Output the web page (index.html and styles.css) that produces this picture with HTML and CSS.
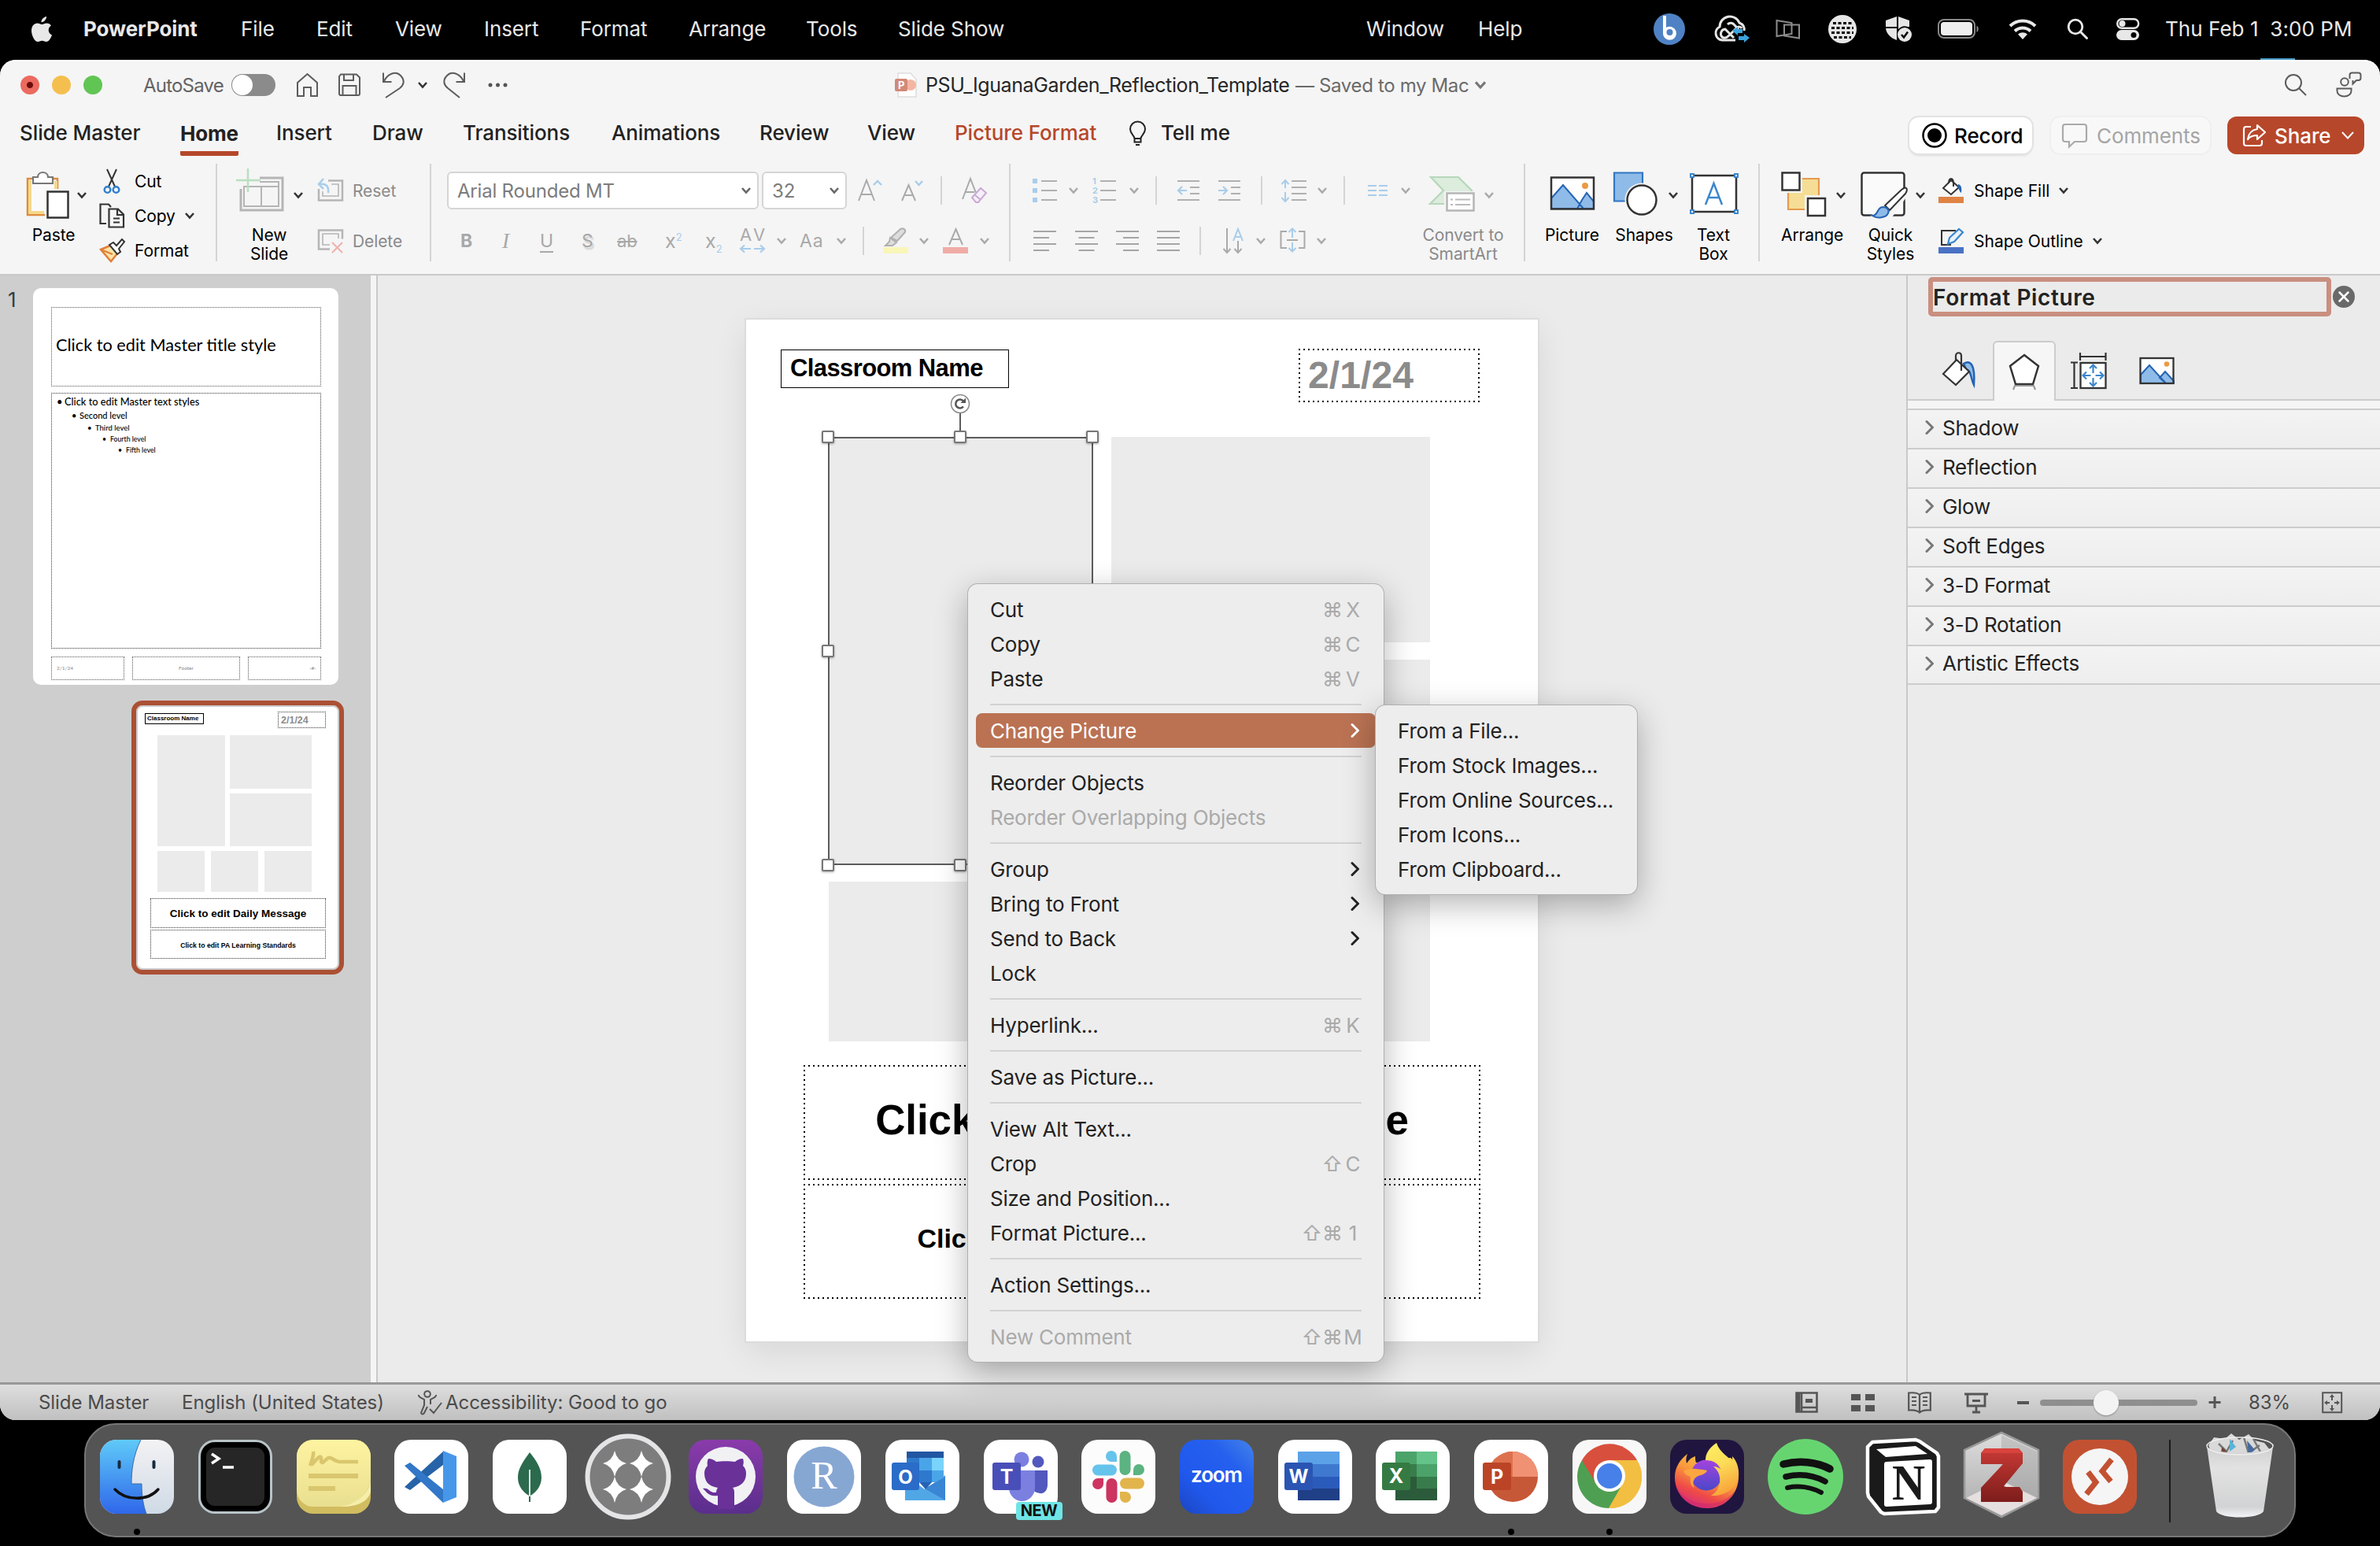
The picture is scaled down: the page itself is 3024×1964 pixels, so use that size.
FILE: index.html
```html
<!DOCTYPE html>
<html lang="en">
<head>
<meta charset="utf-8">
<title>PSU_IguanaGarden_Reflection_Template</title>
<link rel="stylesheet" href="styles.css">
</head>
<body>
<svg class="defs" width="0" height="0">
  <symbol id="chev" viewBox="0 0 14 10"><path d="M2 2l5 5.500L12 2" fill="none" stroke="currentColor" stroke-width="2.600"/></symbol>
  <symbol id="go" viewBox="0 0 12 20"><path d="M2 2.500l7.500 7.500-7.500 7.500" fill="none" stroke="currentColor" stroke-width="3" stroke-linecap="round" stroke-linejoin="round"/></symbol>
  <linearGradient id="gFinder" x2="0" y2="1"><stop offset="0" stop-color="#5fcaf8"/><stop offset="1" stop-color="#2f67ea"/></linearGradient>
  <linearGradient id="gFinder2" x2="0" y2="1"><stop offset="0" stop-color="#f3f2f4"/><stop offset="1" stop-color="#cfdae6"/></linearGradient>
  <linearGradient id="gNote" x2="0" y2="1"><stop offset="0" stop-color="#fdf3a0"/><stop offset="1" stop-color="#e9df90"/></linearGradient>
  <linearGradient id="gGit" x2="0" y2="1"><stop offset="0" stop-color="#8a3bab"/><stop offset="1" stop-color="#5a2e8c"/></linearGradient>
  <linearGradient id="gZoom" x1="1" y1="0" x2="0" y2="1"><stop offset="0" stop-color="#4584e8"/><stop offset=".3" stop-color="#2560ee"/><stop offset=".7" stop-color="#2058ec"/><stop offset="1" stop-color="#1c45c0"/></linearGradient>
  <linearGradient id="gFox" x1=".8" y1="0" x2=".3" y2="1"><stop offset="0" stop-color="#fbd84c"/><stop offset=".45" stop-color="#f9983c"/><stop offset=".75" stop-color="#ee4a48"/><stop offset="1" stop-color="#d42c80"/></linearGradient>
  <linearGradient id="gFlame" x2=".3" y2="1"><stop offset="0" stop-color="#fdf163"/><stop offset=".5" stop-color="#fbdc58"/><stop offset="1" stop-color="#f9a83c"/></linearGradient>
  <linearGradient id="gFoxIn" x2="0" y2="1"><stop offset="0" stop-color="#a443e0"/><stop offset="1" stop-color="#4a48c8"/></linearGradient>
  <linearGradient id="gZot" x2="0" y2="1"><stop offset="0" stop-color="#c93a35"/><stop offset="1" stop-color="#7c1d1b"/></linearGradient>
  <linearGradient id="gZotBg" x2="0" y2="1"><stop offset="0" stop-color="#dedede"/><stop offset="1" stop-color="#a9a9aa"/></linearGradient>
  <linearGradient id="gTrash" x2="0" y2="1"><stop offset="0" stop-color="#cfcfd0"/><stop offset=".3" stop-color="#e2e2e2"/><stop offset=".85" stop-color="#d2d3d4"/><stop offset="1" stop-color="#f2f4f8"/></linearGradient>
</svg>

<nav class="menubar">
  <svg width="28" height="34" viewBox="0 0 28 34"><path fill="#e8e8e8" d="M20 1c.3 3-3 7.500-6.500 7.300C13.200 5 16.500 1.500 20 1zM26 12.500c-5 3-4 10 1 12-1.500 4.200-4 8.500-7 8.500-2.200 0-3-1.300-5.500-1.300S11 33 9 33c-4 0-8-8-8-14 0-6 3.500-9.500 7.500-9.500 2.300 0 4 1.500 5.700 1.500 1.800 0 3.500-1.500 6.300-1.500 2.200 0 4.200 1.200 5.500 3z"/></svg>
  <b>PowerPoint</b><span>File</span><span>Edit</span><span>View</span><span>Insert</span><span>Format</span><span>Arrange</span><span>Tools</span><span>Slide Show</span><span>Window</span><span>Help</span>
  <svg width="40" height="40" viewBox="0 0 40 40"><circle cx="20" cy="20" r="20" fill="#4f82c4"/><path d="M12 3v22a8.500 8.500 0 1 0 4-7V3z" fill="#fff"/><circle cx="20.500" cy="24" r="4" fill="#4f82c4"/></svg>
  <svg width="46" height="34" viewBox="0 0 46 34"><g fill="none" stroke="#e6e6e6" stroke-width="3"><path d="M28 31H11A9 9 0 0 1 8 14 13 13 0 0 1 33 9c5 2 7 6 6 10"/><path d="M26 28L15 17a6 6 0 0 0-4 10c3 2.500 6 1 9-2l9-9c3-3 6-2 7 0M18 11c3-3 7-2 9 1l5 5"/></g><path d="M24 19l7-5v3h6v5h-6v3zM46 28l-7-5v3h-7v5h7v3z" fill="#3da3dd"/></svg>
  <svg width="32" height="26" viewBox="0 0 32 26"><path d="M1.500 2l19 3v14l-19 3zM11 7.500h19v17l-19-3z" fill="none" stroke="#8c8c8c" stroke-width="2"/></svg>
  <svg width="36" height="36" viewBox="0 0 36 36"><circle cx="18" cy="18" r="18" fill="#e6e6e6"/><path d="M6 10.500h24M4 16.500h28M4 22.500h28M7 28.500h22" stroke="#000" stroke-width="3" stroke-dasharray="4 2.500"/></svg>
  <svg width="34" height="34" viewBox="0 0 34 34"><path fill="#e6e6e6" d="M0 6l14-5v13H0zM16 1l14 5v8h-2a11 11 0 0 0-12 3zM0 16h14v15C6 28 1 23 0 16z"/><circle cx="24" cy="24" r="9" fill="#e6e6e6"/><path d="M20 24l3 3.500 5-7" stroke="#000" stroke-width="2.500" fill="none"/></svg>
  <svg width="54" height="26" viewBox="0 0 54 26"><rect x="1" y="1" width="46" height="23" rx="7" fill="none" stroke="#888" stroke-width="2"/><rect x="4" y="4" width="40" height="17" rx="4" fill="#eee"/><path d="M49.500 8.500c3 1.500 3 7 0 8.500z" fill="#888"/></svg>
  <svg width="36" height="28" viewBox="0 0 36 28"><g fill="none" stroke="#e8e8e8" stroke-width="4"><path d="M2 10a23 23 0 0 1 32 0M8 16.500a14.500 14.500 0 0 1 20 0"/></g><path d="M18 27l-6-6.500a9 9 0 0 1 12 0z" fill="#e8e8e8"/></svg>
  <svg width="28" height="28" viewBox="0 0 28 28"><circle cx="11" cy="11" r="8.800" fill="none" stroke="#e8e8e8" stroke-width="2.800"/><path d="M17.500 17.500l8 8" stroke="#e8e8e8" stroke-width="3" stroke-linecap="round"/></svg>
  <svg width="30" height="28" viewBox="0 0 30 28"><rect x="1.200" y="1.200" width="27" height="11.600" rx="5.800" fill="none" stroke="#e8e8e8" stroke-width="2.400"/><circle cx="7.500" cy="7" r="4" fill="#e8e8e8"/><rect y="15" width="29" height="13" rx="6.500" fill="#e8e8e8"/><circle cx="22" cy="21.500" r="3.500" fill="#000"/></svg>
  <span class="clock">Thu Feb 1&nbsp; 3:00 PM</span>
</nav>

<div class="window">
  <i class="tick"></i>
  <header class="titlebar">
    <div class="lights"><i class="red"></i><i class="yellow"></i><i class="green"></i></div>
    <span class="autosave">AutoSave</span>
    <i class="toggle"></i>
    <svg class="ln" width="30" height="32" viewBox="0 0 30 32"><path d="M2 30V13L14.500 2 27 13v17h-8V19h-9v11z"/></svg>
    <svg class="ln" width="30" height="30" viewBox="0 0 30 30"><path d="M4 1.500h20l4 4V26a2 2 0 0 1-2 2H4a2 2 0 0 1-2-2V4zM8 2v7h12V2M6.500 28V16h17v12"/></svg>
    <svg class="ln" width="30" height="34" viewBox="0 0 30 34"><path d="M2 1.500V13h10.500M3 12C8 2 18-1 24 5s4 12-1 16L5 33"/></svg>
    <svg class="chev dk" width="14" height="10"><use href="#chev"/></svg>
    <svg class="ln" width="30" height="34" viewBox="0 0 30 34"><path d="M27 1.500V13H16.500M26 12C21 2 11-1 5 5s-4 12 1 16l15 12"/></svg>
    <svg width="28" height="8" viewBox="0 0 28 8"><g fill="#555"><circle cx="3" cy="4" r="2.500"/><circle cx="12.500" cy="4" r="2.500"/><circle cx="22" cy="4" r="2.500"/></g></svg>
    <svg width="30" height="32" viewBox="0 0 30 32"><path d="M4 1h16l7 8v22H4z" fill="#fff" stroke="#ddd" stroke-width="1.500"/><circle cx="20" cy="16" r="7" fill="#f4b6a2"/><rect y="8" width="16" height="16" rx="2" fill="#d28a78"/><text x="4" y="21" font-size="13" font-weight="700" fill="#fff">P</text></svg>
    <span class="doc">PSU_IguanaGarden_Reflection_Template</span>
    <span class="saved">— Saved to my Mac</span>
    <svg class="chev gy" width="18" height="12"><use href="#chev"/></svg>
    <svg class="ln" width="30" height="30" viewBox="0 0 30 30"><circle cx="12" cy="12" r="10"/><path d="M19 19l9 9"/></svg>
    <svg class="ln" width="34" height="34" viewBox="0 0 34 34"><circle cx="11" cy="13" r="4.800"/><path d="M1.500 21.500h18v3c0 4-4 7-9 7s-9-3-9-7zM17.500 9V4.500a3 3 0 0 1 3-3h8a3 3 0 0 1 3 3V8a3 3 0 0 1-3 3H26l-4.500 4.500V11"/></svg>
  </header>

  <nav class="tabs">
    <span>Slide Master</span><span class="active">Home</span><span>Insert</span><span>Draw</span><span>Transitions</span><span>Animations</span><span>Review</span><span>View</span><span class="hot">Picture Format</span>
    <svg class="bulb" width="24" height="32" viewBox="0 0 24 32"><path d="M7.500 22c0-4-5.500-6-5.500-12a9.500 9.500 0 0 1 19 0c0 6-5.500 8-5.500 12zM7.500 22v4.500h8V22M9 30h5" fill="none" stroke="#222" stroke-width="2"/></svg>
    <span>Tell me</span>
    <div class="btn record"><svg width="32" height="32" viewBox="0 0 32 32"><circle cx="16" cy="16" r="14.500" fill="none" stroke="#000" stroke-width="2.500"/><circle cx="16" cy="16" r="9" fill="#000"/></svg>Record</div>
    <div class="btn comments"><svg width="34" height="32" viewBox="0 0 34 32"><path d="M5 2h24a3 3 0 0 1 3 3v16a3 3 0 0 1-3 3H17l-7 6.500V24H5a3 3 0 0 1-3-3V5a3 3 0 0 1 3-3z" fill="none" stroke="#aaa" stroke-width="2.200"/></svg>Comments</div>
    <div class="btn share"><svg width="32" height="30" viewBox="0 0 32 30"><path d="M11 4H5a3 3 0 0 0-3 3v18a3 3 0 0 0 3 3h17a3 3 0 0 0 3-3v-4M19 2l10 9-10 9v-5c-6 0-9 1-12 5 1-8 5-12 12-13z" fill="none" stroke="#fff" stroke-width="2.200" stroke-linejoin="round"/></svg>Share<svg width="20" height="12" viewBox="0 0 20 12"><path d="M1 2l7 7.500L15 2" fill="none" stroke="#fff" stroke-width="2"/></svg></div>
  </nav>

  <section class="ribbon">
    <div class="group g-clip">
      <div class="big"><svg width="80" height="60" viewBox="0 0 80 60"><path d="M2 9h38v46H2z" fill="#fafafa" stroke="#e08a3c" stroke-width="2.500"/><path d="M5 11v41h18" fill="none" stroke="#f5d88a" stroke-width="4"/><path d="M38 12v12" stroke="#f5d88a" stroke-width="4"/><path d="M9 15V7h6c0-8 13-8 13 0h6v8z" fill="#fff" stroke="#777" stroke-width="2.200"/><rect x="24" y="22" width="34" height="38" fill="#f5f5f5"/><rect x="27.500" y="25.500" width="26" height="33" fill="#fff" stroke="#333" stroke-width="2.500"/><path d="M66 27l5 5.500 5-5.500" fill="none" stroke="#333" stroke-width="2.600"/></svg><p class="w70">Paste</p></div>
      <div class="small three">
        <div><svg width="34" height="32" viewBox="0 0 34 32"><path d="M10 1l10 22M22 1L12 23" stroke="#333" stroke-width="2"/><g fill="none" stroke="#2f7fd0" stroke-width="2.500"><circle cx="10.500" cy="27" r="3.800"/><circle cx="21.500" cy="27" r="3.800"/></g></svg>Cut</div>
        <div><svg width="34" height="32" viewBox="0 0 34 32"><path d="M9 26H1.500V1.500H12L15 5M12.500 7.500H24l7 7V30.500H12.500zM23 8v7h8M18 19.500h8M18 24.500h8" fill="none" stroke="#333" stroke-width="2.200"/></svg>Copy<svg class="chev dk" width="14" height="10"><use href="#chev"/></svg></div>
        <div><svg width="34" height="32" viewBox="0 0 34 32"><path d="M2 15l12-5 10 9-9 11z" fill="#fbe3a6" stroke="#e0803a" stroke-width="2.500"/><path d="M2 15l15 6" stroke="#e0803a" stroke-width="2"/><path d="M13 9l5-3 4 4 7-8 3 3-7 9 2 4-4 3z" fill="#fff" stroke="#333" stroke-width="2"/></svg>Format</div>
      </div>
    </div>
    <div class="group g-slides">
      <div class="big"><svg width="90" height="60" viewBox="0 0 90 60"><g fill="none" stroke="#b5b5b5"><path d="M30 8h29v41H6V22" stroke-width="3"/><path d="M10 19h44v25H10zM32 19v25M30 13h24v6" stroke-width="2"/></g><path d="M15-4v30M0 11h31" stroke="#b9dfc0" stroke-width="2.500"/><path d="M74 27l5 5.500 5-5.500" fill="none" stroke="#333" stroke-width="2.600"/></svg><p class="w84">New<br>Slide</p></div>
      <div class="small two off">
        <div><svg width="34" height="32" viewBox="0 0 34 32"><g fill="none" stroke="#b5b5b5" stroke-width="2.500"><path d="M14 3.500h18v25H2V14"/><path d="M18 8h9v15H7v-6" stroke-width="1.600"/></g><path d="M8 1L2 8l6 6M3 8c8-1 12 2 11 11" fill="none" stroke="#a9cdea" stroke-width="2.500"/></svg>Reset</div>
        <div><svg width="34" height="32" viewBox="0 0 34 32"><g fill="none" stroke="#b5b5b5" stroke-width="2.500"><path d="M16 26.500H2v-24h30v11"/><path d="M16 21H7V7h20v6" stroke-width="1.600"/></g><path d="M19 18l13 13M32 18L19 31" stroke="#f0b0ac" stroke-width="2"/></svg>Delete</div>
      </div>
    </div>
    <div class="group g-font">
      <div class="frow r1">
        <div class="select fname">Arial Rounded MT<svg class="chev gy2" width="14" height="10"><use href="#chev"/></svg></div>
        <div class="select fsize">32<svg class="chev gy2" width="14" height="10"><use href="#chev"/></svg></div>
        <svg width="32" height="30" viewBox="0 0 32 30"><path d="M1 28L11 2l10 26M5 20h13" fill="none" stroke="#aaa" stroke-width="2"/><path d="M20 8l5-5 5 5" fill="none" stroke="#a9cdea" stroke-width="2.400"/></svg>
        <svg width="32" height="30" viewBox="0 0 32 30"><path d="M1 28L9.500 8 18 28M4 21h11" fill="none" stroke="#aaa" stroke-width="2"/><path d="M18 3l4.500 5L27 3" fill="none" stroke="#a9cdea" stroke-width="2.400"/></svg>
        <i class="sep"></i>
        <svg width="34" height="34" viewBox="0 0 34 34"><path d="M1 28L11 2l7 18M5 19h11" fill="none" stroke="#aaa" stroke-width="2"/><path d="M13 26l11-12 7 6-10 12h-3zM16 22l7 6" fill="#f5f0f8" stroke="#c9a9d8" stroke-width="2"/></svg>
      </div>
      <div class="frow r2">
        <b>B</b><em>I</em><u>U</u><span class="shadowed">S</span><s>ab</s><span class="x">x<sup>2</sup></span><span class="x">x<sub>2</sub></span>
        <svg width="34" height="34" viewBox="0 0 34 34"><text x="0" y="17" font-size="22" textLength="32" fill="#aaa">AV</text><path d="M2 27h12M18 27h12M6 22.500l-5 4.500 5 4.500M26 22.500l5 4.500-5 4.500" fill="none" stroke="#a9cdea" stroke-width="2.200"/></svg>
        <svg class="chev lt" width="14" height="10"><use href="#chev"/></svg>
        <span class="aa">Aa</span>
        <svg class="chev lt" width="14" height="10"><use href="#chev"/></svg>
        <i class="sep"></i>
        <svg width="34" height="34" viewBox="0 0 34 34"><path d="M10 13L22 2c4-2 7 1 6 4L18 17zM9 13l8 6-5 4H3l5-5z" fill="#ddd" stroke="#b0b0b0" stroke-width="2"/><rect y="25" width="32" height="8" fill="#f9f6b8"/></svg>
        <svg class="chev lt" width="14" height="10"><use href="#chev"/></svg>
        <svg width="34" height="34" viewBox="0 0 34 34"><path d="M8 22L16.500 2 25 22M11 15h11" fill="none" stroke="#aaa" stroke-width="2"/><rect y="25" width="32" height="8" fill="#f0aca6"/></svg>
        <svg class="chev lt" width="14" height="10"><use href="#chev"/></svg>
      </div>
    </div>
    <div class="group g-para">
      <div class="prows">
        <div class="prow p1">
          <svg width="32" height="32" viewBox="0 0 32 32"><path d="M11 4h20M11 16h20M11 28h20" stroke="#b0b0b0" stroke-width="2.200"/><path d="M0 4h6M0 16h6M0 28h6" stroke="#a9cdea" stroke-width="6"/></svg>
          <svg class="chev lt" width="14" height="10"><use href="#chev"/></svg>
          <svg width="32" height="34" viewBox="0 0 32 34"><path d="M10 5h20M10 17h20M10 29h20" stroke="#b0b0b0" stroke-width="2.200"/><g font-size="11" font-weight="700" fill="#a9cdea"><text x="0" y="9">1</text><text x="0" y="21">2</text><text x="0" y="33">3</text></g></svg>
          <svg class="chev lt" width="14" height="10"><use href="#chev"/></svg>
          <i class="sep"></i>
          <svg width="30" height="32" viewBox="0 0 30 32"><path d="M0 4h28M16 12h12M16 20h12M0 28h28" stroke="#b0b0b0" stroke-width="2.200"/><path d="M12 16H1M6 11l-5 5 5 5" fill="none" stroke="#a9cdea" stroke-width="2.200"/></svg>
          <svg width="30" height="32" viewBox="0 0 30 32"><path d="M0 4h28M16 12h12M16 20h12M0 28h28" stroke="#b0b0b0" stroke-width="2.200"/><path d="M0 16h11M6 11l5 5-5 5" fill="none" stroke="#a9cdea" stroke-width="2.200"/></svg>
          <i class="sep"></i>
          <svg width="34" height="32" viewBox="0 0 34 32"><path d="M14 4h19M14 12h19M14 20h19M14 28h19" stroke="#b0b0b0" stroke-width="2.200"/><path d="M6 3v10M6 18v12M1.500 8L6 3l4.500 5M1.500 25L6 30l4.500-5" fill="none" stroke="#a9cdea" stroke-width="2"/></svg>
          <svg class="chev lt" width="14" height="10"><use href="#chev"/></svg>
          <i class="sep"></i>
          <svg width="26" height="20" viewBox="0 0 26 20"><path d="M0 4h11M0 10h11M0 16h11M14 4h11M14 10h11M14 16h11" stroke="#a9cdea" stroke-width="2.200"/></svg>
          <svg class="chev lt" width="14" height="10"><use href="#chev"/></svg>
        </div>
        <div class="prow p2">
          <svg width="30" height="30" viewBox="0 0 30 30"><path d="M0 3h29M0 11h20M0 19h29M0 27h20" stroke="#a5a5a5" stroke-width="2.200"/></svg>
          <svg width="30" height="30" viewBox="0 0 30 30"><path d="M0 3h29M4.500 11h20M0 19h29M4.500 27h20" stroke="#a5a5a5" stroke-width="2.200"/></svg>
          <svg width="30" height="30" viewBox="0 0 30 30"><path d="M0 3h29M9 11h20M0 19h29M9 27h20" stroke="#a5a5a5" stroke-width="2.200"/></svg>
          <svg width="30" height="30" viewBox="0 0 30 30"><path d="M0 3h29M0 11h29M0 19h29M0 27h29" stroke="#a5a5a5" stroke-width="2.200"/></svg>
          <i class="sep"></i>
          <svg width="30" height="34" viewBox="0 0 30 34"><path d="M5 1v30M.500 27L5 32l4.500-5M19 17v14M14.500 27l4.500 5 4.500-5" fill="none" stroke="#aaa" stroke-width="2"/><path d="M13 17L19 2l6 15M15 12h8" fill="none" stroke="#a9cdea" stroke-width="2"/></svg>
          <svg class="chev lt" width="14" height="10"><use href="#chev"/></svg>
          <svg width="34" height="34" viewBox="0 0 34 34"><path d="M9 5H1.500v21H9M24 5h7.500v21H24M9 16h14" fill="none" stroke="#aaa" stroke-width="2"/><path d="M16 2v11M16 19v11M11.500 6L16 1.500 20.500 6M11.500 26l4.500 4.500 4.500-4.500" fill="none" stroke="#a9cdea" stroke-width="2"/></svg>
          <svg class="chev lt" width="14" height="10"><use href="#chev"/></svg>
        </div>
      </div>
      <div class="big off"><svg width="96" height="60" viewBox="0 0 96 60"><path d="M12 7h35l17 17-18 17H11l17-17z" fill="#dcecdd" stroke="#b5d8ba" stroke-width="2.200"/><rect x="29" y="25" width="40" height="28" fill="#f5f5f5"/><rect x="32.500" y="27.500" width="34" height="22" fill="#fff" stroke="#b5b5b5" stroke-width="2.500"/><path d="M37 35.500h3M43 35.500h19M37 42h3M43 42h19" stroke="#bbb" stroke-width="2"/><path d="M81 27l5 5.500 5-5.500" fill="none" stroke="#aaa" stroke-width="2.600"/></svg><p class="w106">Convert to<br>SmartArt</p></div>
    </div>
    <div class="group g-insert">
      <div class="big"><svg width="70" height="60" viewBox="0 0 70 60"><rect x="9" y="7.500" width="54" height="40" fill="#fff"/><path d="M9 34L24 17l26 30H9zM48 36l6-9 9 11v9H42z" fill="#8fbbe8" stroke="#2463b4" stroke-width="2"/><circle cx="52" cy="18" r="4" fill="#eb9a44"/><rect x="9" y="7.500" width="54" height="40" fill="none" stroke="#333" stroke-width="2.500"/></svg><p class="w71">Picture</p></div>
      <div class="big"><svg width="86" height="60" viewBox="0 0 86 60"><path d="M1 1.500h36v36H1z" fill="#8fbbe8" stroke="#3176c4" stroke-width="2.200"/><circle cx="36" cy="36" r="21.500" fill="#f5f5f5"/><circle cx="36" cy="36" r="18.500" fill="#fff" stroke="#333" stroke-width="2.500"/><path d="M71 27l5 5.500 5-5.500" fill="none" stroke="#333" stroke-width="2.600"/></svg><p class="w78">Shapes</p></div>
      <div class="big"><svg width="66" height="60" viewBox="0 0 66 60"><rect x="4" y="5" width="56" height="46" fill="#fff" stroke="#333" stroke-width="2.500"/><path d="M21 42L31.500 15 42 42M24.500 33h14" fill="none" stroke="#3b86cc" stroke-width="2.500"/><path d="M2 3h4v4H2zM58 3h4v4h-4zM2 49h4v4H2zM58 49h4v4h-4z" fill="#fff" stroke="#3b86cc" stroke-width="2"/></svg><p class="w62">Text<br>Box</p></div>
    </div>
    <div class="group g-shape">
      <div class="big"><svg width="86" height="60" viewBox="0 0 86 60"><path d="M9 9h39v39H9z" fill="#f5dd95" stroke="#e59a4e" stroke-width="2.200"/><path d="M0 0h27v27H0zM30 30h28v28H30z" fill="#f5f5f5"/><path d="M1.500 1.500h22v22h-22zM34 34h22v22H34z" fill="#fff" stroke="#333" stroke-width="2.500"/><path d="M71 27l5 5.500 5-5.500" fill="none" stroke="#333" stroke-width="2.600"/></svg><p class="w78">Arrange</p></div>
      <div class="big"><svg width="86" height="60" viewBox="0 0 86 60"><rect x="1.500" y="1.500" width="54" height="54" rx="3" fill="#fafafa" stroke="#333" stroke-width="2.500"/><path d="M12 58l16-18L52 22l8 8-20 28z" fill="#f5f5f5"/><path d="M58 21c2 2 1 4-1 7L37 49l-6-6 20-19c3-3 6-4 7-3z" fill="#fff" stroke="#333" stroke-width="2"/><path d="M15 56c8 0 5-10 13-11 6 0 9 4 7 8-3 6-14 7-20 3z" fill="#8fbbe8" stroke="#2463b4" stroke-width="2"/><path d="M71 27l5 5.500 5-5.500" fill="none" stroke="#333" stroke-width="2.600"/></svg><p class="w76">Quick<br>Styles</p></div>
      <div class="small two fill">
        <div><svg width="34" height="34" viewBox="0 0 34 34"><path d="M6 14L16 4l10 9-10 9zM13 8c0-8 6-8 6 0v4" fill="#fff" stroke="#333" stroke-width="2"/><path d="M25 9c4 1 5 5 4 11-3-2-3-6-5-8z" fill="#2463b4"/><rect y="25" width="32" height="8" fill="#df8344"/></svg>Shape Fill<svg class="chev dk" width="14" height="10"><use href="#chev"/></svg></div>
        <div><svg width="34" height="34" viewBox="0 0 34 34"><path d="M22 4H4v18h12" fill="none" stroke="#333" stroke-width="2"/><path d="M12 21l2-8L26 2l5 4-11 12z" fill="#e9f3fb" stroke="#3b86cc" stroke-width="2.200"/><rect y="25" width="32" height="8" fill="#4a72c4"/></svg>Shape Outline<svg class="chev dk" width="14" height="10"><use href="#chev"/></svg></div>
      </div>
    </div>
  </section>

  <main class="work">
    <aside class="thumbs">
      <span class="num">1</span>
      <div class="list">
        <div class="master">
          <div class="m-title">Click to edit Master title style</div>
          <div class="m-body">
            <p class="l1">Click to edit Master text styles</p><p class="l2">Second level</p><p class="l3">Third level</p><p class="l4">Fourth level</p><p class="l5">Fifth level</p>
          </div>
          <div class="m-foot"><span>2/1/24</span><span>Footer</span><span>‹#›</span></div>
        </div>
        <div class="layout">
          <div class="t-top"><span class="t-class">Classroom Name</span><span class="t-date">2/1/24</span></div>
          <div class="t-pics"><i class="tall"></i><i></i><i></i></div>
          <div class="t-row"><i></i><i></i><i></i></div>
          <div class="t-daily">Click to edit Daily Message</div>
          <div class="t-pa">Click to edit PA Learning Standards</div>
        </div>
      </div>
    </aside>
    <i class="splitter"></i>
    <section class="canvas">
      <div class="slide">
        <div class="obj cname">Classroom Name</div>
        <div class="obj dots date">2/1/24</div>
        <div class="pic pa"></div><div class="pic pb"></div><div class="pic pc"></div><div class="pic pd"></div><div class="pic pe"></div><div class="pic pf"></div>
        <i class="stem"></i>
        <svg class="rot" width="28" height="28" viewBox="0 0 28 28"><circle cx="14" cy="14" r="11.500" fill="#fff" stroke="#888" stroke-width="1.500"/><path d="M18 17.500a5.500 5.500 0 1 1 0-7" fill="none" stroke="#555" stroke-width="2.500"/><path d="M21 6.500v6.500h-6.500z" fill="#555"/></svg>
        <i class="h h1"></i><i class="h h2"></i><i class="h h3"></i><i class="h h4"></i><i class="h h5"></i><i class="h h6"></i>
        <div class="obj dots daily">Click to edit Daily Message</div>
        <div class="obj dots std">Click to edit PA Learning Standards</div>
      </div>
    </section>
    <aside class="format">
      <div class="f-head"><h2>Format Picture</h2><svg width="28" height="28" viewBox="0 0 28 28"><circle cx="14" cy="14" r="14" fill="#696969"/><path d="M8.500 8.500l11 11M19.500 8.500l-11 11" stroke="#fff" stroke-width="2.500" stroke-linecap="round"/></svg></div>
      <div class="f-tabs">
        <span><svg width="46" height="48" viewBox="0 0 46 48"><path d="M27 15c8-5 15 0 13 27-4-8-3-18-10-20z" fill="#8fbbe8" stroke="#2463b4" stroke-width="2.500"/><path d="M1 28L18 10l16 15-17 17z" fill="#fff" stroke="#333" stroke-width="2.200"/><path d="M17 12V5c0-5 7-5 7 0v19" fill="none" stroke="#333" stroke-width="2.200"/></svg></span>
        <span class="on"><svg width="42" height="48" viewBox="0 0 42 48"><path d="M20 3l18 14-7 23H9L2 17z" fill="#fff" stroke="#333" stroke-width="2.500"/><path d="M6 47l2-5h24l2 5" fill="none" stroke="#999" stroke-width="2.200"/></svg></span>
        <span><svg width="48" height="48" viewBox="0 0 48 48"><path d="M13 1v10M45.500 1v10M13 6h33M1 13.500h9M1 46h9M5.500 14v32" stroke="#333" stroke-width="2.200"/><rect x="13.500" y="14" width="32" height="32" fill="#fff" stroke="#333" stroke-width="2.300"/><path d="M29.500 27V17M29.500 33v10M26.500 30h-10M32.500 30h10M25 21l4.500-4.500L34 21M25 39l4.500 4.500L34 39M21 25.500L16.500 30l4.500 4.500M38 25.500l4.500 4.500-4.500 4.500" fill="none" stroke="#3b86cc" stroke-width="2.200"/></svg></span>
        <span><svg width="46" height="48" viewBox="0 0 46 48"><rect x="1.500" y="8" width="42" height="32" fill="#fff"/><path d="M2 29l11-12 21 23H2zM26 33l7-8 11 12v3H34z" fill="#8fbbe8" stroke="#2463b4" stroke-width="2"/><circle cx="35" cy="15.500" r="3.300" fill="#eb9a44"/><rect x="1.500" y="8" width="42" height="32" fill="none" stroke="#333" stroke-width="2.300"/></svg></span>
      </div>
      <ul class="sections">
        <li><svg width="12" height="20"><use href="#go"/></svg>Shadow</li><li><svg width="12" height="20"><use href="#go"/></svg>Reflection</li><li><svg width="12" height="20"><use href="#go"/></svg>Glow</li><li><svg width="12" height="20"><use href="#go"/></svg>Soft Edges</li><li><svg width="12" height="20"><use href="#go"/></svg>3-D Format</li><li><svg width="12" height="20"><use href="#go"/></svg>3-D Rotation</li><li><svg width="12" height="20"><use href="#go"/></svg>Artistic Effects</li>
      </ul>
    </aside>
  </main>

  <footer class="status">
    <span>Slide Master</span><span>English (United States)</span>
    <svg width="34" height="32" viewBox="0 0 34 32"><circle cx="13" cy="5" r="3.800" fill="none" stroke="#555" stroke-width="2"/><path d="M2 6c-1 3 6 5 7 6v7L5 29c1 2 3 2 4 0l4-8M24 6c1 3-6 5-7 6v6M16 24l5 5 10-13" fill="none" stroke="#555" stroke-width="2"/></svg>
    <span>Accessibility: Good to go</span>
    <svg width="30" height="28" viewBox="0 0 30 28"><path d="M1.500 1.500h26v24h-26zM8 2v24M8 20h19" fill="none" stroke="#555" stroke-width="2.600"/><path d="M2 2h4.500v23H2zM13 9h9v5h-9z" fill="#555"/></svg>
    <svg width="32" height="26" viewBox="0 0 32 26"><path d="M0 2h12v8H0zM18 2h12v8H18zM0 16h12v8H0zM18 16h12v8H18z" fill="#555"/></svg>
    <svg width="32" height="28" viewBox="0 0 32 28"><path d="M15 4C12 1 6 1 1.200 1.500v22c5-.5 11 0 13.800 3 3-3 9-3.500 13.800-3v-22C24 1 18 1 15 4zv22M5 7h6M5 12h6M5 17h6M19 7h6M19 12h6M19 17h6" fill="none" stroke="#555" stroke-width="2.200"/></svg>
    <svg width="32" height="28" viewBox="0 0 32 28"><path d="M0 3h30M4 4v14h22V4M15 18v7M10 26h10M10 11.500h10" fill="none" stroke="#555" stroke-width="2.800"/></svg>
    <i class="minus"></i>
    <div class="slider"><i></i></div>
    <svg width="18" height="18" viewBox="0 0 18 18"><path d="M8 1v15M.5 8.500h15" stroke="#555" stroke-width="3"/></svg>
    <span>83%</span>
    <svg width="28" height="28" viewBox="0 0 28 28"><path d="M1.200 1.200h24v25h-24z" fill="none" stroke="#555" stroke-width="2"/><path d="M13 11V6M13 17v5M10 14H5M16 14h5" stroke="#555" stroke-width="2"/><path d="M10 7l3-4 3 4zM10 21l3 4 3-4zM7 11l-4 3 4 3zM19 11l4 3-4 3z" fill="#555"/></svg>
  </footer>
</div>

<div class="menu context">
  <p>Cut<kbd><i>⌘</i><i>X</i></kbd></p><p>Copy<kbd><i>⌘</i><i>C</i></kbd></p><p>Paste<kbd><i>⌘</i><i>V</i></kbd></p>
  <hr>
  <p class="sel">Change Picture<svg width="12" height="20"><use href="#go"/></svg></p>
  <hr>
  <p>Reorder Objects</p><p class="dis">Reorder Overlapping Objects</p>
  <hr>
  <p>Group<svg width="12" height="20"><use href="#go"/></svg></p><p>Bring to Front<svg width="12" height="20"><use href="#go"/></svg></p><p>Send to Back<svg width="12" height="20"><use href="#go"/></svg></p><p>Lock</p>
  <hr>
  <p>Hyperlink...<kbd><i>⌘</i><i>K</i></kbd></p>
  <hr>
  <p>Save as Picture...</p>
  <hr>
  <p>View Alt Text...</p><p>Crop<kbd><i>⇧</i><i>C</i></kbd></p><p>Size and Position...</p><p>Format Picture...<kbd><i>⇧</i><i>⌘</i><i>1</i></kbd></p>
  <hr>
  <p>Action Settings...</p>
  <hr>
  <p class="dis">New Comment<kbd><i>⇧</i><i>⌘</i><i>M</i></kbd></p>
</div>
<div class="menu sub"><p>From a File...</p><p>From Stock Images...</p><p>From Online Sources...</p><p>From Icons...</p><p>From Clipboard...</p></div>

<div class="dock">
  <span class="run"><svg viewBox="0 0 94 94"><rect width="94" height="94" rx="21" fill="url(#gFinder2)"/><path d="M52 0C42 20 40 40 40 56h13c0 14 2 28 6 38H21A21 21 0 0 1 0 73V21A21 21 0 0 1 21 0z" fill="url(#gFinder)"/><path d="M52 0C42 20 40 40 40 56h13c0 14 2 28 6 38" fill="none" stroke="#3a6da8" stroke-width="1"/><path d="M24.500 28v7M68.500 28v7" stroke="#1a2a3c" stroke-width="4" stroke-linecap="round"/><path d="M19 63c14 15 42 15 55 0" fill="none" stroke="#111" stroke-width="3.500" stroke-linecap="round"/></svg></span>
  <span><svg viewBox="0 0 94 94"><rect width="94" height="94" rx="21" fill="#b9c4c8"/><rect x="3" y="3" width="88" height="88" rx="18" fill="#000"/><rect x="10" y="10" width="74" height="74" rx="11" fill="#262626"/><path d="M17 18l9 6-9 6M31 35h14" fill="none" stroke="#fff" stroke-width="3.500"/></svg></span>
  <span><svg viewBox="0 0 94 94"><rect width="94" height="94" rx="21" fill="#d1bd60"/><path d="M21 0h52a21 21 0 0 1 21 21v30c-4 20-20 33-40 34H21A21 21 0 0 1 0 64V21A21 21 0 0 1 21 0z" fill="url(#gNote)"/><path d="M54 85c20-2 38-16 40-34v15c-3 13-18 20-40 19z" fill="#f5eea9"/><g fill="none" stroke="#d9c66e" stroke-width="6"><path d="M17 33c3-8 5-14 4-18M19 32c10-12 13-14 12-4 3 4 7-7 12-5 4 2 8 6 14 5h21" stroke-width="4.500"/><path d="M15 46h63M15 62h34"/></g></svg></span>
  <span><svg viewBox="0 0 94 94"><rect width="94" height="94" rx="21" fill="#fff"/><path d="M13 60l7 4 42-32V15z" fill="#2763a8"/><path d="M13 33l7-4 42 34v17z" fill="#3277c8"/><path d="M62 14l17 7v52l-17 7z" fill="#4797e9"/></svg></span>
  <span><svg viewBox="0 0 94 94"><rect width="94" height="94" rx="21" fill="#fff"/><path d="M47 16c8 10 15 20 15 32 0 11-7 19-14 23v8h-2v-8c-7-4-14-12-14-23 0-12 8-22 15-32z" fill="#2c6a4d"/><path d="M47 38v34" stroke="#dfe9e4" stroke-width="2"/></svg></span>
  <span><svg viewBox="0 0 94 94"><circle cx="47" cy="47" r="51.500" fill="#7d7d7d" stroke="#e4e4e6" stroke-width="6"/><path id="st" d="M30 14q3 13 15 16-12 3-15 17-3-14-15-17 12-3 15-16z" fill="#fff"/><use href="#st" x="34"/><use href="#st" y="33"/><use href="#st" x="34" y="33"/></svg></span>
  <span><svg viewBox="0 0 94 94"><rect width="94" height="94" rx="21" fill="url(#gGit)"/><circle cx="47" cy="47" r="38" fill="#f1f1f4"/><path d="M37 88V71c-12 2-15-6-19-9 8-2 8 6 17 5 0-3 1-4 2-6-12-2-17-8-17-19 0-4 2-7 4-9-1-4 0-7 1-9 4 0 8 2 10 4 6-1 18-1 24 0 2-2 6-4 10-4 1 3 1 6 0 9 3 3 4 6 4 10 0 10-6 16-17 18 2 2 2 4 2 7v20z" fill="#6a3199"/></svg></span>
  <span><svg viewBox="0 0 94 94"><rect width="94" height="94" rx="21" fill="#fff"/><circle cx="47" cy="47" r="38.500" fill="#87a7d3"/><text x="47" y="62" text-anchor="middle" font-family="'Liberation Serif',serif" font-size="50" fill="#fff">R</text></svg></span>
  <span><svg viewBox="0 0 94 94"><rect width="94" height="94" rx="21" fill="#fff"/><path d="M27 15h47v8H27z" fill="#2256a2"/><path d="M27 23h16v16H27zM43 39h16v15H43z" fill="#2e79cd"/><path d="M43 23h16v16H43z" fill="#4aa5e8"/><path d="M59 23h15v16H59z" fill="#7ad3fa"/><path d="M59 39h15v15H59z" fill="#4aa5e8"/><path d="M25 45l25 18 26-18v32H25z" fill="#51a7e6"/><path d="M50 62l26 15V47z" fill="#3a85d4"/><path d="M43 54h16l-8 9z" fill="#2563b4"/><rect x="8" y="29" width="35" height="35" rx="3" fill="#2a6cc8"/><text x="25.500" y="56" text-anchor="middle" font-size="24" font-weight="700" fill="#fff">O</text></svg></span>
  <span><svg viewBox="0 0 94 94"><rect width="94" height="94" rx="21" fill="#fff"/><circle cx="69" cy="28" r="7.500" fill="#5258bd"/><path d="M60 39h21v18c0 8-5 12-10 11s-11-3-11-11z" fill="#5258bd"/><circle cx="48" cy="25" r="9.500" fill="#7b80e0"/><path d="M32 39h33v22a16.500 17 0 0 1-33 0z" fill="#7b80e0"/><rect x="11" y="29" width="36" height="35" rx="3" fill="#494fb8"/><text x="29" y="56" text-anchor="middle" font-size="25" font-weight="700" fill="#fff">T</text></svg><b class="new">NEW</b></span>
  <span><svg viewBox="0 0 94 94"><rect width="94" height="94" rx="21" fill="#fcfcfc"/><g stroke-width="14" stroke-linecap="round"><path d="M21 38.500h17" stroke="#66c3ec"/><path d="M55.500 21v17" stroke="#5bb381"/><path d="M73 55.500H56" stroke="#e2b44c"/><path d="M38.500 73V56" stroke="#cd3460"/></g><path d="M45 28H38a7 7 0 1 1 7-7z" fill="#66c3ec"/><path d="M66 45v-7a7 7 0 1 1 7 7z" fill="#5bb381"/><path d="M49 66h7a7 7 0 1 1-7 7z" fill="#e2b44c"/><path d="M28 49v7a7 7 0 1 1-7-7z" fill="#cd3460"/></svg></span>
  <span><svg viewBox="0 0 94 94"><rect width="94" height="94" rx="21" fill="url(#gZoom)"/><text x="47" y="54" text-anchor="middle" font-size="26" font-weight="600" textLength="66" fill="#fff">zoom</text></svg></span>
  <span><svg viewBox="0 0 94 94"><rect width="94" height="94" rx="21" fill="#fff"/><path d="M25 15h53v16H25z" fill="#5ba1e8"/><path d="M25 31h53v16H25z" fill="#3f79cf"/><path d="M25 47h53v15H25z" fill="#2a5bbb"/><path d="M25 62h53v15H25z" fill="#1f3f87"/><rect x="8" y="29" width="36" height="35" rx="3" fill="#2a55b3"/><text x="26" y="55" text-anchor="middle" font-size="24" font-weight="700" fill="#fff">W</text></svg></span>
  <span><svg viewBox="0 0 94 94"><rect width="94" height="94" rx="21" fill="#fff"/><path d="M25 15h27v16H25z" fill="#4ba36a"/><path d="M52 15h26v16H52z" fill="#63c388"/><path d="M25 31h27v16H25z" fill="#387c4b"/><path d="M52 31h26v16H52z" fill="#4ba36a"/><path d="M25 47h53v30H25z" fill="#2b5b3a"/><path d="M52 47h26v15H52z" fill="#387c4b"/><rect x="8" y="29" width="36" height="35" rx="3" fill="#357a42"/><text x="26" y="55" text-anchor="middle" font-size="25" font-weight="700" fill="#fff">X</text></svg></span>
  <span class="run"><svg viewBox="0 0 94 94"><rect width="94" height="94" rx="21" fill="#fff"/><circle cx="49" cy="47" r="32" fill="#c65838"/><path d="M49 15a32 32 0 0 1 32 32H49z" fill="#f09174"/><path d="M49 15a32 32 0 0 0-32 32h32z" fill="#dd714d"/><rect x="11" y="29" width="36" height="35" rx="3" fill="#bb4427"/><text x="29" y="56" text-anchor="middle" font-size="25" font-weight="700" fill="#fff">P</text></svg></span>
  <span class="run"><svg viewBox="0 0 94 94"><rect width="94" height="94" rx="21" fill="#f7f7f7"/><path d="M47 46L12 26a40 40 0 0 1 70 0z" fill="#d94f3d"/><path d="M47 46L12 26a40 40 0 0 0 34 61l18-31z" fill="#4f9f52"/><path d="M47 46V26h35a40 40 0 0 1-36 61z" fill="#f2bf42"/><path d="M12 26L30 56l17-10V26z" fill="#d94f3d"/><path d="M30 56a20 20 0 0 0 34 0L46 87z" fill="#4f9f52"/><path d="M64 56L46 87a40 40 0 0 0 36-61H47z" fill="#f2bf42"/><circle cx="47" cy="46" r="20" fill="#fff"/><circle cx="47" cy="46" r="16" fill="#4680e8"/></svg></span>
  <span><svg viewBox="0 0 94 94"><rect width="94" height="94" rx="21" fill="#20153f"/><path d="M22 18c-2 5-2 8-1 12 3-5 7-8 11-9 0 3 0 6 1 8 12 0 30-6 44-6 7 6 10 14 10 24 0 22-17 40-40 40S6 70 6 48c0-13 6-22 16-30z" fill="url(#gFox)"/><circle cx="46" cy="45" r="19.500" fill="url(#gFoxIn)"/><path d="M59 4C50 10 45 17 45 26c10 0 18 4 20 12-4-3-6-4-10-4 8 6 10 16 7 25-2 6-5 9-10 12 16 1 32-8 35-24 1-10-2-20-8-26 0 4 1 6 0 8-4-8-16-12-20-25z" fill="url(#gFlame)"/><path d="M17 40c8-5 16-3 30-1-1 5-10 6-13 8-5 3-6 9-3 14-5-2-6-8-5-14-4-1-7-3-9-7z" fill="#fba640"/><path d="M7 56c6 16 20 25 40 25 16 0 28-6 36-17-6 14-19 23-36 23C27 87 11 75 7 56z" fill="#c9266f" opacity=".45"/></svg></span>
  <span><svg viewBox="0 0 94 94"><circle cx="47" cy="47" r="48" fill="#66d570"/><g fill="none" stroke="#111" stroke-linecap="round"><path d="M19 31c20-5 42-3 59 6" stroke-width="9.500"/><path d="M22 47c17-4 35-2 50 6" stroke-width="7.500"/><path d="M24 61c14-3 29-1 43 6" stroke-width="6"/></g></svg></span>
  <span><svg viewBox="0 0 94 94"><path d="M7 3L62 0l5 2 22 15 2 4v65l-4 5-65 3-4-2L2 72 1 67V9z" fill="#1a1a1a" stroke="#fff" stroke-width="4.500" stroke-linejoin="round"/><path d="M12 12l50-4 15 10-53 4z" fill="#fff"/><path d="M25 28l55-3c2 0 3 1 3 3v51c0 2-1 3-3 3l-55 3c-2 0-3-1-3-3V31c0-2 1-3 3-3z" fill="#fff"/><text x="53" y="76" text-anchor="middle" font-family="'Liberation Serif',serif" font-size="64" font-weight="700" textLength="42" lengthAdjust="spacingAndGlyphs" fill="#1a1a1a">N</text></svg></span>
  <span><svg viewBox="0 0 94 94"><path d="M47-9L94 13v61L47 98 0 74V13z" fill="url(#gZotBg)" stroke="#98999a" stroke-width="2.500"/><path d="M47-6L92 15v58L47 52z" fill="#999" opacity=".35"/><path d="M2 74l45-22 45 22-45 22z" fill="#e6dfdf"/><path d="M21 17l5-6h43l5 6v13L50 59l3 1h17l4 6v13H21V61l28-30H21z" fill="url(#gZot)"/><path d="M21 17l5-6h43l5 6z" fill="#d8433d"/></svg></span>
  <span><svg viewBox="0 0 94 94"><rect width="94" height="94" rx="21" fill="#c25132"/><circle cx="47" cy="47" r="36" fill="#f5f5f5"/><path d="M32 41l10 13-12 15M62 25L50 40l11 13" fill="none" stroke="#c25132" stroke-width="7"/></svg></span>
  <i class="dsep"></i>
  <span class="trash"><svg width="86" height="110" viewBox="0 0 86 110"><path d="M3 16l7-10 14 2 8-7 10 8 12-7 8 8 12 3 8 10-10 16H12z" fill="#d9d9da"/><path d="M16 14l10 10 8-14M48 6l6 20 14-10M60 8l10 18" stroke="#777" stroke-width="2.500" fill="none"/><path d="M30 8l8 10-8 6z" fill="#58b4d8"/><path d="M52 10l10 12-8 6z" fill="#456a9c"/><path d="M20 18l8 8h-9z" fill="#704538"/><path d="M1 18c10 10 72 10 84 0L73 100c-6 10-54 10-60 0z" fill="url(#gTrash)"/><ellipse cx="43" cy="17" rx="42" ry="11" fill="none" stroke="#eee" stroke-width="1.500"/></svg></span>
</div>
</body>
</html>
```
FILE: styles.css
```css
*{box-sizing:border-box}
body{margin:0;width:3024px;height:1964px;overflow:hidden;background:#000;font-family:Inter,"Liberation Sans",sans-serif;font-size:26px;color:#222;position:relative;white-space:nowrap}
p,h2,ul{margin:0;padding:0}
svg{display:block;overflow:visible;flex:none}
.defs{position:absolute}
i{font-style:normal}

.menubar{height:76px;padding:0 0 2px 39px;display:grid;align-items:center;color:#e9e9e9;
  grid-template-columns:67px 200px 96px 100px 113px 122px 138px 149px 117px 595px 142px 223px 76px 79px 67px 73px 66px 90px 74px 63px 62px auto;letter-spacing:-.1px}
.menubar b,.menubar span{position:relative;top:-1px}
.menubar b{font-weight:700}
.clock{letter-spacing:.05px}

.window{height:1728px;background:#f5f5f5;border-radius:20px;display:flex;flex-direction:column;overflow:hidden;box-shadow:inset 0 2px #fff}
.tick{position:absolute;left:2872px;top:74px;width:44px;height:2px;background:#4a9cc4}
.titlebar{height:64px;padding-left:26px;display:grid;align-items:center;font-size:25px;
  grid-template-columns:156px 112px 82px 53px 56px 45px 33px 57px 517px 39px 470px 226px 1030px 66px 30px}
.lights{display:flex;gap:16px}
.lights i{width:24px;height:24px;border-radius:50%}
.red{background:radial-gradient(circle,#6b0d0a 3.5px,#ec6a5f 4.500px)}
.yellow{background:#f5bf4f}
.green{background:#61c554}
.autosave{color:#636363;font-size:24px;letter-spacing:-.8px}
.toggle{width:56px;height:28px;border-radius:14px;background:radial-gradient(circle at 14px 14px,#fff 12.500px,transparent 13.500px),#8b8b8b}
.ln{fill:none;stroke:#5c5c5c;stroke-width:2}
.dk{color:#333}.gy{color:#777}.gy2{color:#666}.lt{color:#aaa}
.doc{color:#262626;letter-spacing:-.4px}
.saved{color:#6a6a6a;font-size:24px;letter-spacing:-.35px}

.tabs{height:60px;padding-left:25px;display:grid;align-items:center;font-weight:500;
  grid-template-columns:204px 122px 122px 115px 189px 188px 137px 111px 221px 41px 951px 180px 224px 174px}
.tabs>span{letter-spacing:-.1px;padding-bottom:3px}
.tabs .active{font-weight:700;letter-spacing:-.2px;justify-self:start;height:52px;line-height:47px;margin-top:4px;border-bottom:6px solid #b5472a;border-radius:2px;padding:0}
.hot{color:#b5472a}
.btn{display:flex;align-items:center;height:46px;margin-top:4px;border-radius:12px;background:#fff;color:#000;box-shadow:0 0 0 2px #e2e2e2,0 3px 3px #ddd;letter-spacing:-.1px}
.record{width:156px;padding-left:16px;gap:9px}
.comments{width:202px;padding-left:13px;gap:11px;background:#f8f8f8;color:#a5a5a5;font-weight:400;box-shadow:0 0 0 2px #efefef}
.share{width:174px;height:48px;padding-left:19px;gap:9px;background:#b7472a;color:#fff;box-shadow:none}
.share svg:last-child{margin-left:4px}

.ribbon{height:150px;padding:8px 0 0;display:grid;font-size:21px;color:#000;border-bottom:2px solid #c9c9c9;
  grid-template-columns:274px 272px 736px 654px 298px 790px}
.group{height:124px;border-left:2px solid #d4d4d4;display:grid;align-items:start;letter-spacing:-.1px}
.g-clip{border-left:0;padding-left:33px;grid-template-columns:93px auto}
.g-slides{padding-left:24px;grid-template-columns:103px auto}
.g-font{padding-left:20px}
.g-para{padding-left:28px;grid-template-columns:494px auto}
.g-insert{padding-left:24px;grid-template-columns:88px 96px auto}
.g-shape{padding-left:27px;grid-template-columns:101px 99px auto}
.big{padding-top:10px}
.big p{margin-top:9px;line-height:24px;text-align:center}
.w62{width:62px}.w70{width:70px}.w71{width:71px}.w76{width:76px}.w78{width:78px}.w84{width:84px}.w106{width:106px}
.off{color:#8a8a8a}
.small>div{display:flex;align-items:center;gap:11px}
.three>div{height:44px}
.two{padding-top:2px}
.two>div{height:64px}
.fill{letter-spacing:0}
.frow,.prow{display:grid;align-items:center;height:64px}
.frow.r1,.prow.p1{margin-top:2px}
.r1{grid-template-columns:400px 122px 55px 50px 27px 34px}
.r2{padding-left:17px;font-size:23px;color:#a8a8a8;grid-template-columns:53px 48px 53px 45px 61px 51px 44px 46px 30px 46px 34px 26px 45px 31px 46px 14px}
.r2 em{font-family:"Liberation Serif",serif;font-size:27px}
.r2 u{text-underline-offset:5px}
.r2 s{font-size:22px}
.shadowed{text-shadow:2px 3px 2px #ccc}
.x{font-size:25px;letter-spacing:0}
.r2 sup,.r2 sub{font-size:13px;color:#a9cdea;line-height:0}
.aa{letter-spacing:1px}
.sep{width:2px;height:36px;background:#d4d4d4}
.select{height:48px;border:2px solid #d5d5d5;border-radius:6px;background:#fff;color:#7c7c7c;font-size:24px;display:flex;align-items:center;justify-content:space-between;padding:0 7px 0 11px}
.fname{width:396px;letter-spacing:-.2px}
.fsize{width:108px}
.p1{grid-template-columns:45px 31px 46px 34px 28px 52px 54px 25px 46px 34px 31px 41px 14px}
.p2{padding-left:1px;grid-template-columns:53px 52px 52px 54px 30px 41px 31px 46px 14px}

.work{height:1406px;display:grid;grid-template-columns:471px 9px 1942px 602px}
.thumbs{background:#cecece;display:grid;grid-template-columns:42px auto;padding-top:16px}
.num{padding-left:10px;color:#3c3c3c;font-size:26px;line-height:30px}
.splitter{background:#f5f5f5;border-right:2px solid #c9c9c9}
.master{width:388px;height:504px;border-radius:10px;background:#fff;padding:24px 22px 0 23px;font-family:Lato,"Noto Sans",sans-serif;color:#000}
.m-title{height:101px;border:1px dotted #555;padding:33px 0 0 5px;font-size:21.700px;line-height:28px}
.m-body{height:325px;margin-top:8px;border:1px dotted #333}
.m-body p{font-weight:500}
.m-body p::before{content:"•";display:inline-block;width:10px}
.m-body .l1{font-size:12.800px;line-height:20px;padding-left:6px}
.m-body .l2{font-size:11px;line-height:16px;padding-left:25px}
.m-body .l3{font-size:9.500px;line-height:15px;padding-left:45px}
.m-body .l4{font-size:8.700px;line-height:14px;padding-left:64px}
.m-body .l5{font-size:8.700px;line-height:13px;padding-left:84px}
.m-foot{display:grid;grid-template-columns:93px 137px 93px;gap:10px;margin-top:10px;font-size:6.500px;line-height:28px;color:#888}
.m-foot span{border:1px dotted #555;height:30px;padding:0 6px}
.m-foot span:nth-child(2){text-align:center}
.m-foot span:nth-child(3){text-align:right}
.layout{width:270px;height:348px;margin:20px 0 0 125px;border:6px solid #ab5034;border-radius:14px;background:#fff;box-shadow:inset 0 0 0 2px #ccc;padding-top:8px;font-family:"Liberation Sans",sans-serif;font-weight:700;color:#000}
.t-top{display:flex;justify-content:space-between;padding:0 17px 0 11px;height:22px}
.t-class{margin-top:2px;width:75px;height:14px;border:1.500px solid #000;font-size:8px;line-height:11px;padding-left:2px}
.t-date{width:61px;height:21px;border:1px dotted #333;color:#8b8b8b;font-size:12.500px;line-height:20px;padding-left:3px}
.t-pics{display:grid;grid-template:68px 67px/86px 104px;gap:6px;margin:8px 0 0 27px}
.t-pics i,.t-row i{background:#ebebeb}
.tall{grid-row:1/3}
.t-row{display:grid;grid-template:52px/60px 60px 60px;gap:8px;margin:6px 0 0 27px}
.t-daily,.t-pa{margin:8px 17px 0 18px;height:38px;border:1px dotted #333;text-align:center;font-size:13.500px;line-height:38px}
.t-pa{margin-top:2px;font-size:8.700px;height:37px}

.canvas{background:#ebebeb;position:relative}
.slide{position:absolute;left:468px;top:56px;width:1006px;height:1298px;background:#fff;box-shadow:0 0 0 2px #dcdcdc,0 12px 40px rgba(0,0,0,.09);font-family:"Liberation Sans",sans-serif;font-weight:700;color:#000}
.obj,.pic,.h,.stem,.rot{position:absolute}
.dots{background:
  repeating-linear-gradient(90deg,#000 0 2px,transparent 2px 6px) 0 0/100% 2px no-repeat,
  repeating-linear-gradient(90deg,#000 0 2px,transparent 2px 6px) 0 100%/100% 2px no-repeat,
  repeating-linear-gradient(#000 0 2px,transparent 2px 6px) 0 0/2px 100% no-repeat,
  repeating-linear-gradient(#000 0 2px,transparent 2px 6px) 100% 0/2px 100% no-repeat}
.cname{left:44px;top:38px;width:290px;height:49px;border:1.500px solid #000;font-size:31px;line-height:45px;padding-left:11px;letter-spacing:-.6px}
.date{left:702px;top:37px;width:230px;height:68px;color:#8b8b8b;font-size:48px;line-height:68px;padding-left:12px;letter-spacing:.1px}
.pic{background:#ebebeb}
.pa{left:104px;top:149px;width:337px;height:544px;border:2px solid #5c5c5c}
.pb{left:464px;top:149px;width:405px;height:261px}
.pc{left:464px;top:432px;width:405px;height:260px}
.pd,.pe,.pf{top:714px;width:236px;height:203px}
.pd{left:105px}.pe{left:369px}.pf{left:633px}
.stem{left:271px;top:118px;width:2px;height:26px;background:#5c5c5c}
.rot{left:258px;top:93px}
.h{width:16px;height:16px;border:2px solid #777;border-radius:2px;background:#fff;box-shadow:0 1px 3px rgba(0,0,0,.35)}
.h1,.h4,.h5{left:96px}.h2,.h6{left:264px}.h3{left:432px}
.h1,.h2,.h3{top:141px}.h4{top:413px}.h5,.h6{top:685px}
.daily,.std{left:73px;width:860px;text-align:center}
.daily{top:947px;height:146px;font-size:53px;line-height:140px;letter-spacing:-.1px}
.std{top:1098px;height:146px;font-size:34px;line-height:138px;letter-spacing:-.1px}

.format{background:#ebebeb;border-left:2px solid #c9c9c9}
.f-head{display:flex;align-items:center;gap:2px;padding:2px 0 0 26px}
.f-head h2{width:512px;height:50px;border:6px solid #c98f80;border-radius:5px;font-size:28px;font-weight:600;line-height:40px;letter-spacing:.6px}
.f-tabs{height:76px;margin-top:31px;display:grid;grid-template-columns:108px 80px 104px 310px;align-items:stretch}
.f-tabs span{border-bottom:2px solid #ccc;display:flex;padding-top:14px}
.f-tabs span:nth-child(1){padding-left:44px}
.f-tabs span:nth-child(3){padding-left:18px}
.f-tabs span:nth-child(4){padding-left:2px}
.f-tabs .on{border:2px solid #ccc;border-bottom:0;border-radius:6px 6px 0 0;background:#f6f6f6;padding-left:18px}
.f-tabs .on svg{margin-top:-1px}
.sections{list-style:none;border-top:10px solid #f5f5f5}
.sections li{height:50px;border-top:2px solid #ccc;display:flex;align-items:center;gap:10px;padding:0 0 4px 22px;background:linear-gradient(#f3f3f3,#eee);letter-spacing:-.3px}
.sections li:last-child{height:51px;border-bottom:2px solid #ccc}
.sections svg{color:#777}

.status{height:48px;border-top:3px solid #999;background:linear-gradient(#dedede,#c0c0c0);display:grid;align-items:center;padding-left:49px;font-size:24px;color:#4a4a4a;letter-spacing:-.05px;
  grid-template-columns:182px 299px 36px 1715px 71px 72px 72px 67px 29px 214px 51px 93px 30px}
.minus{width:15px;height:4px;background:#555}
.slider{width:200px;height:8px;border-radius:4px;background:#8f8f8f;position:relative}
.slider i{position:absolute;left:68px;top:-12px;width:32px;height:32px;border-radius:50%;background:#f3f3f3;box-shadow:0 1px 2px #888}

.menu{position:absolute;background:#ededed;border-radius:12px;padding:10px;box-shadow:0 0 0 1px #b0b0b0,0 12px 40px rgba(0,0,0,.3);font-size:26px;letter-spacing:-.2px}
.menu p{height:44px;padding:0 18px;display:flex;align-items:center;justify-content:space-between;border-radius:8px}
.menu hr{border:0;margin:10px 18px;height:2px;background:#d2d2d2}
.menu p svg{margin-right:2px}
.context{left:1230px;top:742px;width:528px;height:988px}
.sub{left:1748px;top:896px;width:332px;height:240px}
.menu .sel{background:#ba7253;color:#fff}
.menu .dis{color:#aaa}
kbd{font:inherit;color:#aaa;display:flex;gap:4px;letter-spacing:0}
kbd i{width:22px;display:flex;justify-content:center}

.dock{position:absolute;left:107px;top:1808px;width:2810px;height:145px;border:2px solid #777;border-radius:40px;background:#545454;display:grid;padding:19px 0 0 3px;
  grid-template-columns:repeat(21,124.700px) 54px 124px;justify-items:center;align-items:start}
.dock span{position:relative}
.dock span>svg{width:94px;height:94px}
.run::after{content:"";position:absolute;left:43px;top:113px;width:8px;height:8px;border-radius:50%;background:#000}
.new{position:absolute;left:41px;top:79px;width:59px;height:23px;border-radius:4px;background:#6fe4e6;color:#111;font-size:20px;line-height:23px;text-align:center;letter-spacing:-.5px}
.dsep{width:2px;height:105px;background:#1a1a1a}
.dock .trash svg{width:86px;height:110px;margin-top:-9px}
```
